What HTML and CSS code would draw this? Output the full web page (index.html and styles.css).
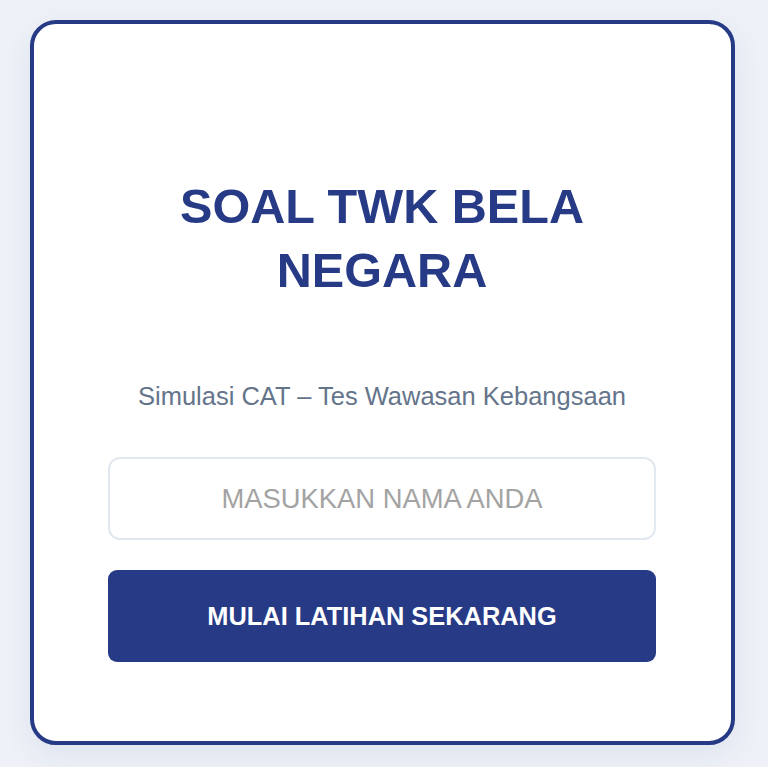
FILE: index.html
```html
<!DOCTYPE html>
<html lang="id">
<head>
    <meta charset="UTF-8">
    <meta name="viewport" content="width=device-width, initial-scale=1.0">
    <title>Soal TWK Bela Negara</title>
    <link rel="stylesheet" href="styles.css">
</head>
<body>
    <main class="card">
        <h1 class="title">SOAL TWK BELA NEGARA</h1>
        <p class="subtitle">Simulasi CAT – Tes Wawasan Kebangsaan</p>
        <form class="start-form" id="startForm">
            <input type="text" class="name-input" id="nameInput" placeholder="MASUKKAN NAMA ANDA">
            <button type="submit" class="start-btn">MULAI LATIHAN SEKARANG</button>
        </form>
    </main>
</body>
</html>
```

FILE: styles.css
```css
body {
    margin: 0;
    padding: 20px 0 22px 30px;
    background-color: #eef1f7;
    font-family: "Liberation Sans", Arial, Helvetica, sans-serif;
    color: #1e293b;
}

.card {
    box-sizing: border-box;
    width: 705px;
    padding: 150px 75px 79px 74px;
    background-color: #ffffff;
    border: 4px solid #263a86;
    border-radius: 26px;
    box-shadow: 0 10px 30px rgba(38, 58, 134, 0.08);
    text-align: center;
}

.title {
    margin: 0;
    font-size: 48.6px;
    line-height: 64px;
    font-weight: bold;
    color: #263a86;
}

.subtitle {
    margin: 80px 0 0;
    font-size: 25.5px;
    line-height: 29px;
    color: #64748b;
}

.start-form {
    display: flex;
    flex-direction: column;
    gap: 30px;
    margin-top: 46px;
}

.name-input {
    box-sizing: border-box;
    width: 100%;
    height: 83px;
    padding: 0 20px;
    border: 2px solid #e2e8f0;
    border-radius: 12px;
    font-family: inherit;
    font-size: 27.4px;
    text-align: center;
    text-transform: uppercase;
    color: #334155;
    outline: none;
}

.name-input::placeholder { color: #a3a3a3; }
.name-input:focus { border-color: #263a86; }

.start-btn {
    height: 92px;
    border: none;
    border-radius: 9px;
    background-color: #263a86;
    color: #ffffff;
    font-family: inherit;
    font-size: 25.4px;
    font-weight: bold;
    cursor: pointer;
}

.start-btn:hover { background-color: #1f3173; }
```
